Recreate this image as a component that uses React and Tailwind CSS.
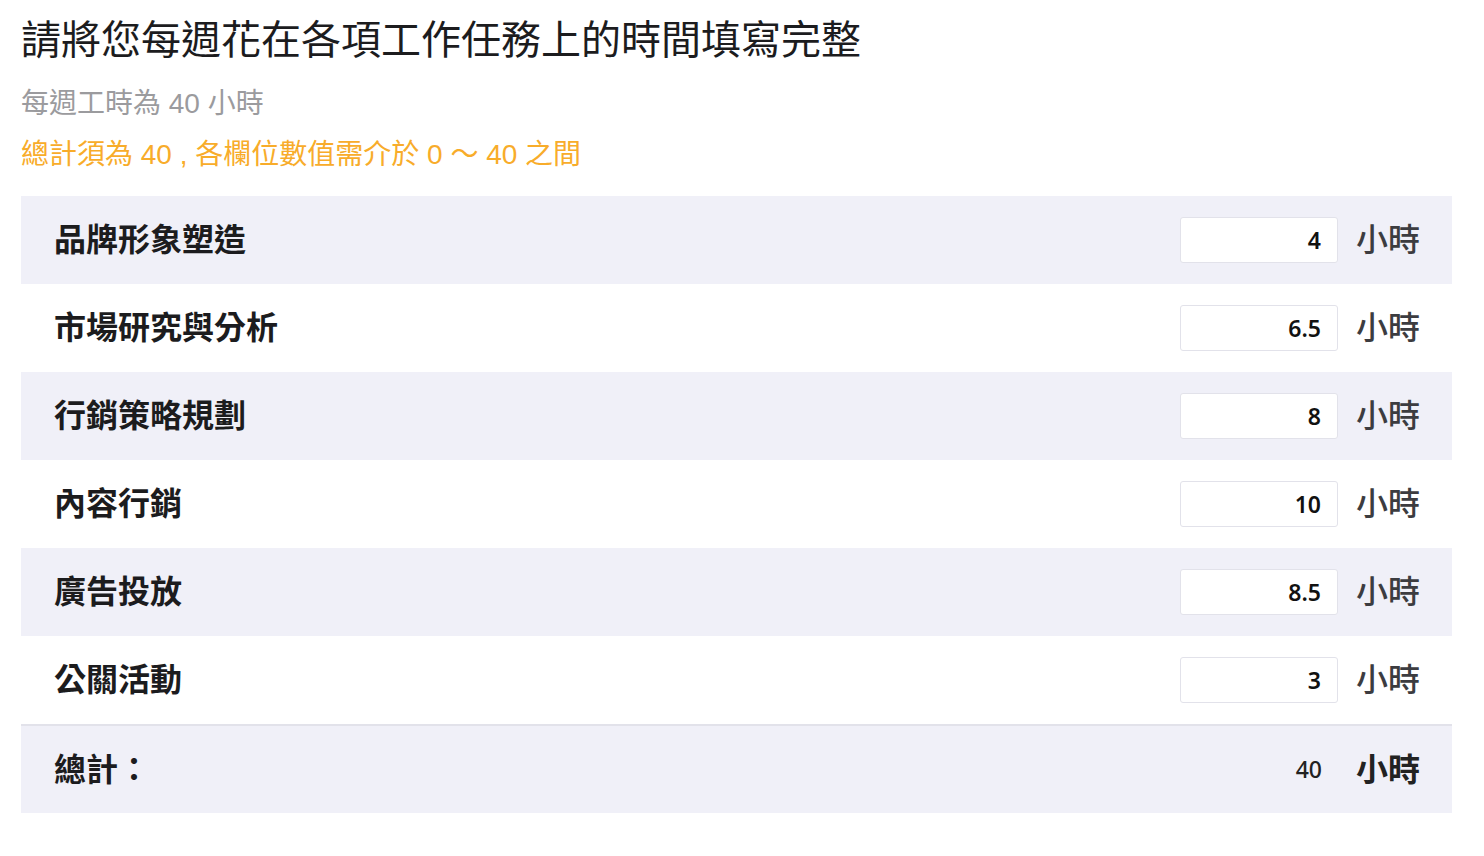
import React from "react";

const rows = [
  { label: "品牌形象塑造", value: "4" },
  { label: "市場研究與分析", value: "6.5" },
  { label: "行銷策略規劃", value: "8" },
  { label: "內容行銷", value: "10" },
  { label: "廣告投放", value: "8.5" },
  { label: "公關活動", value: "3" },
];

const font = { fontFamily: '"Liberation Sans", "Noto Sans CJK TC", sans-serif' };
const numFont = { fontFamily: '"Noto Sans", "Liberation Sans", sans-serif' };

export default function App() {
  return (
    <div className="min-h-[856px] w-[1484px] bg-white pl-[21px] pr-[32px] pt-[14px]" style={font}>
      <h1 className="text-[40px] leading-[52px] font-normal text-[#1c1c1e]">
        請將您每週花在各項工作任務上的時間填寫完整
      </h1>
      <p className="mt-[20px] text-[28px] leading-[36px] text-[#9b9b9e]">每週工時為 40 小時</p>
      <p className="mt-[15px] text-[28px] leading-[36px] text-[#f8ac2a]">
        總計須為 40 , 各欄位數值需介於 0 ～ 40 之間
      </p>
      <div className="mt-[23px] flex flex-col">
        {rows.map((r, i) => (
          <div
            key={r.label}
            className={`flex h-[88px] items-center pl-[33px] pr-[32px] ${i % 2 === 0 ? "bg-[#f0f0f8]" : "bg-white"}`}
          >
            <div className="flex-1 text-[32px] font-bold text-[#1c1c1e]">{r.label}</div>
            <div
              className="flex h-[46px] w-[158px] items-center justify-end rounded-[3px] border border-[#e2e2ea] bg-white pr-[16px] text-[23px] font-semibold text-[#111]"
              style={numFont}
            >
              {r.value}
            </div>
            <div className="ml-[18px] text-[32px] font-medium text-[#3c3c40]">小時</div>
          </div>
        ))}
        <div className="flex h-[89px] items-center border-t-2 border-[#e2e2ea] bg-[#f0f0f8] pl-[33px] pr-[32px]">
          <div className="flex-1 text-[32px] font-bold text-[#1c1c1e]">總計：</div>
          <div className="flex w-[158px] justify-end pr-[16px] text-[23px] font-medium text-[#222]" style={numFont}>
            40
          </div>
          <div className="ml-[18px] text-[32px] font-bold text-[#222]">小時</div>
        </div>
      </div>
    </div>
  );
}
